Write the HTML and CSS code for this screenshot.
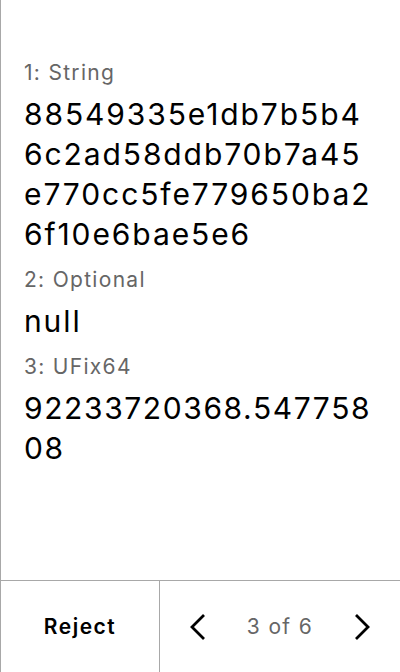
FILE: index.html
```html
<!DOCTYPE html>
<html>
<head>
<meta charset="utf-8">
<link rel="stylesheet" href="styles.css">
</head>
<body>
<div class="screen">
  <main class="content">
    <div class="field">
      <div class="label">1: String</div>
      <div class="value">88549335e1db7b5b46c2ad58ddb70b7a45e770cc5fe779650ba26f10e6bae5e6</div>
    </div>
    <div class="field">
      <div class="label">2: Optional</div>
      <div class="value">null</div>
    </div>
    <div class="field">
      <div class="label">3: UFix64</div>
      <div class="value value-num">92233720368.54775808</div>
    </div>
  </main>
  <footer class="bar">
    <button class="reject">Reject</button>
    <div class="pager">
      <button class="nav">
        <svg width="20" height="28" viewBox="0 0 20 28"><path d="M16 2 L4 14 L16 26" fill="none" stroke="#000" stroke-width="2.8"/></svg>
      </button>
      <span class="count">3 of 6</span>
      <button class="nav">
        <svg width="20" height="28" viewBox="0 0 20 28"><path d="M4 2 L16 14 L4 26" fill="none" stroke="#000" stroke-width="2.8"/></svg>
      </button>
    </div>
  </footer>
</div>
</body>
</html>
```
FILE: styles.css
```css
html, body {
  margin: 0;
  padding: 0;
  background: #fff;
}
body {
  font-family: Inter, "Noto Sans", sans-serif;
  color: #000;
}
.screen {
  width: 400px;
  height: 672px;
  box-sizing: border-box;
  border-left: 1px solid #a8a8a8;
  display: flex;
  flex-direction: column;
}
.content {
  flex: 1;
  padding: 59px 24px 0 23px;
  display: flex;
  flex-direction: column;
  gap: 12px;
}
.label {
  font-size: 21px;
  line-height: 28px;
  letter-spacing: 1.3px;
  color: #666;
  margin-bottom: 7px;
}
.value {
  font-size: 30px;
  line-height: 40px;
  letter-spacing: 1.9px;
  word-break: break-all;
}
.value-num {
  letter-spacing: 1.6px;
}
.bar {
  height: 92px;
  border-top: 1px solid #a8a8a8;
  box-sizing: border-box;
  display: flex;
}
button {
  font-family: inherit;
  background: none;
  border: none;
  padding: 0;
  cursor: pointer;
}
.reject {
  width: 159px;
  border-right: 1px solid #a8a8a8;
  font-size: 21px;
  font-weight: 600;
  letter-spacing: 1.5px;
  color: #000;
}
.pager {
  flex: 1;
  display: flex;
  align-items: center;
  justify-content: space-between;
  padding: 0 28px;
}
.nav {
  display: flex;
  align-items: center;
}
.count {
  font-size: 21px;
  letter-spacing: 1.4px;
  color: #666;
}
```
